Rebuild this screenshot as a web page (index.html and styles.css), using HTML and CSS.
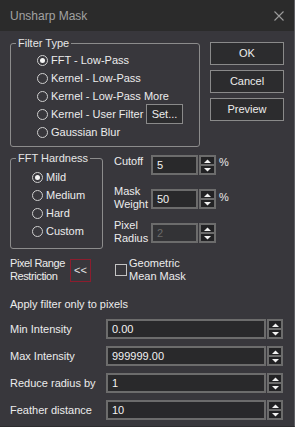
FILE: index.html
```html
<!DOCTYPE html>
<html>
<head>
<meta charset="utf-8">
<link rel="stylesheet" href="styles.css">
</head>
<body>
<div class="window">
  <div class="titlebar">
    <span class="title">Unsharp Mask</span>
    <svg class="close" width="10" height="10" viewBox="0 0 10 10"><path d="M0.5 0.5 L9.5 9.5 M9.5 0.5 L0.5 9.5" stroke="#9c9c9c" stroke-width="1.1" fill="none"/></svg>
  </div>
  <div class="content">
    <div class="row-top">
      <fieldset class="group group-filter">
        <legend>Filter Type</legend>
        <div class="rows rows-filter">
          <div class="radio-row"><span class="radio checked"></span><span>FFT - Low-Pass</span></div>
          <div class="radio-row"><span class="radio"></span><span>Kernel - Low-Pass</span></div>
          <div class="radio-row"><span class="radio"></span><span>Kernel - Low-Pass More</span></div>
          <div class="radio-row"><span class="radio"></span><span>Kernel - User Filter</span><button class="btn btn-set">Set...</button></div>
          <div class="radio-row"><span class="radio"></span><span>Gaussian Blur</span></div>
        </div>
      </fieldset>
      <div class="actions">
        <button class="btn btn-action">OK</button>
        <button class="btn btn-action">Cancel</button>
        <button class="btn btn-action">Preview</button>
      </div>
    </div>

    <div class="row-mid">
      <fieldset class="group group-hard">
        <legend>FFT Hardness</legend>
        <div class="rows rows-hard">
          <div class="radio-row"><span class="radio checked"></span><span>Mild</span></div>
          <div class="radio-row"><span class="radio"></span><span>Medium</span></div>
          <div class="radio-row"><span class="radio"></span><span>Hard</span></div>
          <div class="radio-row"><span class="radio"></span><span>Custom</span></div>
        </div>
      </fieldset>
      <div class="params">
        <div class="plabel plabel-one">Cutoff</div>
        <div class="field">5</div>
        <div class="spin"><span class="spin-btn"><svg width="7" height="4" viewBox="0 0 7 4"><path d="M0 4 L3.5 0.5 L7 4 Z" fill="#f2f2f2"/></svg></span><span class="spin-btn"><svg width="7" height="4" viewBox="0 0 7 4"><path d="M0 0 L7 0 L3.5 3.5 Z" fill="#f2f2f2"/></svg></span></div>
        <div class="unit">%</div>

        <div class="plabel plabel-two">Mask<br>Weight</div>
        <div class="field">50</div>
        <div class="spin"><span class="spin-btn"><svg width="7" height="4" viewBox="0 0 7 4"><path d="M0 4 L3.5 0.5 L7 4 Z" fill="#f2f2f2"/></svg></span><span class="spin-btn"><svg width="7" height="4" viewBox="0 0 7 4"><path d="M0 0 L7 0 L3.5 3.5 Z" fill="#f2f2f2"/></svg></span></div>
        <div class="unit unit-two">%</div>

        <div class="plabel plabel-two">Pixel<br>Radius</div>
        <div class="field field-disabled">2</div>
        <div class="spin"><span class="spin-btn"><svg width="7" height="4" viewBox="0 0 7 4"><path d="M0 4 L3.5 0.5 L7 4 Z" fill="#f2f2f2"/></svg></span><span class="spin-btn"><svg width="7" height="4" viewBox="0 0 7 4"><path d="M0 0 L7 0 L3.5 3.5 Z" fill="#f2f2f2"/></svg></span></div>
        <div></div>
      </div>
    </div>

    <div class="row-range">
      <div class="range-label">Pixel Range<br>Restriction</div>
      <button class="btn btn-collapse">&lt;&lt;</button>
      <span class="checkbox"></span>
      <div class="check-label">Geometric<br>Mean Mask</div>
    </div>

    <div class="apply">Apply filter only to pixels</div>

    <div class="fields">
      <div class="flabel">Min Intensity</div>
      <div class="field">0.00</div>
      <div class="spin"><span class="spin-btn"><svg width="7" height="4" viewBox="0 0 7 4"><path d="M0 4 L3.5 0.5 L7 4 Z" fill="#f2f2f2"/></svg></span><span class="spin-btn"><svg width="7" height="4" viewBox="0 0 7 4"><path d="M0 0 L7 0 L3.5 3.5 Z" fill="#f2f2f2"/></svg></span></div>

      <div class="flabel">Max Intensity</div>
      <div class="field">999999.00</div>
      <div class="spin"><span class="spin-btn"><svg width="7" height="4" viewBox="0 0 7 4"><path d="M0 4 L3.5 0.5 L7 4 Z" fill="#f2f2f2"/></svg></span><span class="spin-btn"><svg width="7" height="4" viewBox="0 0 7 4"><path d="M0 0 L7 0 L3.5 3.5 Z" fill="#f2f2f2"/></svg></span></div>

      <div class="flabel">Reduce radius by</div>
      <div class="field">1</div>
      <div class="spin"><span class="spin-btn"><svg width="7" height="4" viewBox="0 0 7 4"><path d="M0 4 L3.5 0.5 L7 4 Z" fill="#f2f2f2"/></svg></span><span class="spin-btn"><svg width="7" height="4" viewBox="0 0 7 4"><path d="M0 0 L7 0 L3.5 3.5 Z" fill="#f2f2f2"/></svg></span></div>

      <div class="flabel">Feather distance</div>
      <div class="field">10</div>
      <div class="spin"><span class="spin-btn"><svg width="7" height="4" viewBox="0 0 7 4"><path d="M0 4 L3.5 0.5 L7 4 Z" fill="#f2f2f2"/></svg></span><span class="spin-btn"><svg width="7" height="4" viewBox="0 0 7 4"><path d="M0 0 L7 0 L3.5 3.5 Z" fill="#f2f2f2"/></svg></span></div>
    </div>
  </div>
</div>
</body>
</html>
```

FILE: styles.css
```css
* { box-sizing: border-box; }
html, body { margin: 0; padding: 0; }
body {
  width: 295px;
  height: 427px;
  overflow: hidden;
  background: #38373c;
  font-family: "Liberation Sans", Arial, sans-serif;
  font-size: 11px;
  color: #ececec;
}
.window {
  width: 295px;
  height: 427px;
  display: flex;
  flex-direction: column;
  border-right: 1px solid #5e5e62;
  border-bottom: 1px solid #2c2c2e;
}
.titlebar {
  height: 31px;
  flex: none;
  background: #2b2b2b;
  display: flex;
  align-items: center;
  padding: 0 10px 0 10px;
}
.title {
  font-size: 12px;
  color: #a2a2a2;
  line-height: 14px;
}
.close { margin-left: auto; display: block; }

.content {
  padding: 6px 0 0 10px;
}

.btn {
  font-family: "Liberation Sans", Arial, sans-serif;
  font-size: 11px;
  color: #ececec;
  background: #2c2c2e;
  border: 1px solid #8a8a8a;
  border-radius: 0;
  padding: 0;
  margin: 0;
  line-height: 13px;
}

/* group boxes */
.group {
  margin: 0;
  padding: 0;
  border: 1px solid #8c8c8c;
  border-radius: 3px;
  min-inline-size: 0;
}
.group legend {
  margin-left: 5px;
  padding: 0 2px;
  line-height: 13px;
  color: #e6e6e6;
}
.rows { display: flex; flex-direction: column; }
.radio-row {
  height: 18px;
  display: flex;
  align-items: center;
  line-height: 13px;
  white-space: nowrap;
}
.radio {
  width: 11px;
  height: 11px;
  border: 1px solid #cfcfcf;
  border-radius: 50%;
  margin-right: 3px;
  display: inline-flex;
  align-items: center;
  justify-content: center;
  flex: none;
}
.radio.checked::after {
  content: "";
  width: 5px;
  height: 5px;
  border-radius: 50%;
  background: #f4f4f4;
}

.row-top { display: flex; align-items: flex-start; }
.group-filter { width: 190px; }
.rows-filter { padding: 1px 16px 5px 26px; }
.btn-set {
  margin-left: auto;
  width: 37px;
  height: 20px;
  flex: none;
}
.actions {
  margin-left: 10px;
  margin-top: 5px;
  width: 74px;
  display: flex;
  flex-direction: column;
  gap: 5px;
}
.btn-action { height: 23px; width: 74px; }

.row-mid { display: flex; align-items: flex-start; margin-top: 5px; }
.group-hard { width: 93px; }
.rows-hard { padding: 3px 0 8px 21px; }

.params {
  margin-left: 11px;
  margin-top: 3px;
  display: grid;
  grid-template-columns: 37px 47px 18px auto;
  grid-auto-rows: 20px;
  row-gap: 14px;
}
.plabel { line-height: 13px; align-self: start; white-space: nowrap; }
.plabel-one { margin-top: 0; }
.plabel-two { margin-top: -4px; }
.unit { line-height: 13px; align-self: start; margin-left: 3px; margin-top: 1px; color: #e8e8e8; }
.unit-two { margin-top: 2px; }

.field {
  height: 20px;
  border: 2px solid #6c6c6c;
  background: #29292b;
  color: #f2f2f2;
  padding-left: 4px;
  line-height: 16px;
  white-space: nowrap;
}
.field-disabled { background: #333336; color: #6a6a6a; }
.spin {
  margin-left: 1px;
  height: 20px;
  background: #6c6c6c;
  padding: 2px;
  display: flex;
  flex-direction: column;
  gap: 2px;
}
.spin-btn {
  flex: 1;
  background: #222224;
  display: flex;
  align-items: center;
  justify-content: center;
}
.spin-btn svg { display: block; }

.row-range {
  display: flex;
  align-items: flex-start;
  margin-top: 8px;
}
.range-label { width: 60px; line-height: 13px; white-space: nowrap; letter-spacing: -0.4px; }
.btn-collapse {
  width: 21px;
  height: 23px;
  margin-top: 2px;
  border: 1px solid #8c1d2e;
  background: transparent;
  color: #e4e4e4;
  letter-spacing: 0;
}
.checkbox {
  width: 12px;
  height: 12px;
  border: 1px solid #c4c4c4;
  margin-left: 24px;
  margin-top: 7px;
  flex: none;
}
.check-label { margin-left: 2px; line-height: 13px; }

.apply { margin-top: 15px; line-height: 13px; }

.fields {
  margin-top: 8px;
  display: grid;
  grid-template-columns: 96px 160px 17px;
  grid-auto-rows: 20px;
  row-gap: 7px;
}
.flabel { align-self: center; line-height: 13px; white-space: nowrap; }
```
